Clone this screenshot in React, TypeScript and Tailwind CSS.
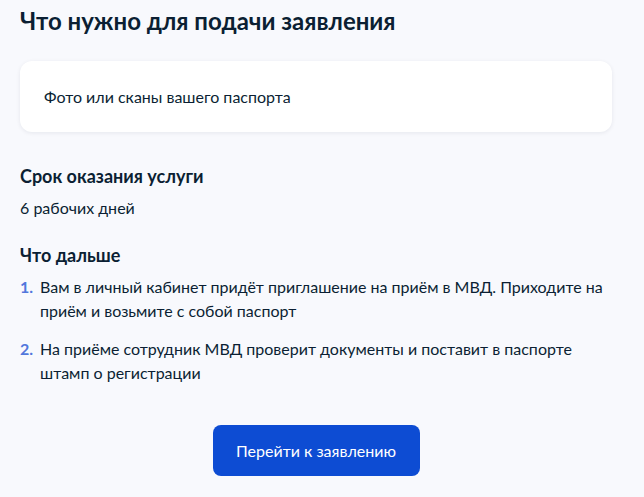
import React from 'react';

const steps = [
  'Вам в личный кабинет придёт приглашение на приём в МВД. Приходите на приём и возьмите с собой паспорт',
  'На приёме сотрудник МВД проверит документы и поставит в паспорте штамп о регистрации',
];

export default function App() {
  return (
    <div
      className="min-h-[497px] w-[644px] bg-[#f8f9fd] px-5 pt-[5px] text-[#0b1f33]"
      style={{ fontFamily: 'Lato, "Noto Sans", sans-serif' }}
    >
      <div className="w-[592px]">
        <h2 className="text-[24px] font-bold leading-[32px]">Что нужно для подачи заявления</h2>

        <div className="mt-6 flex h-[71px] items-center rounded-xl bg-white px-6 shadow-[0_1px_4px_rgba(11,31,51,0.08)]">
          <p className="text-[16px] leading-6">Фото или сканы вашего паспорта</p>
        </div>

        <h3 className="mt-[32px] text-[18px] font-bold leading-6">Срок оказания услуги</h3>
        <p className="mt-2 text-[16px] leading-6">6 рабочих дней</p>

        <h3 className="mt-[23px] text-[18px] font-bold leading-6">Что дальше</h3>
        <ol className="mt-[8px] space-y-[14px]">
          {steps.map((s, i) => (
            <li key={i} className="flex gap-[6px] text-[16px] leading-6">
              <span className="w-[14px] shrink-0 font-bold text-[#5277dc]">{i + 1}.</span>
              <span>{s}</span>
            </li>
          ))}
        </ol>

        <div className="mt-[40px] flex justify-center">
          <button className="h-[51px] w-[207px] rounded-lg bg-[#0d4cd3] text-[16px] text-white">
            Перейти к заявлению
          </button>
        </div>
      </div>
    </div>
  );
}
